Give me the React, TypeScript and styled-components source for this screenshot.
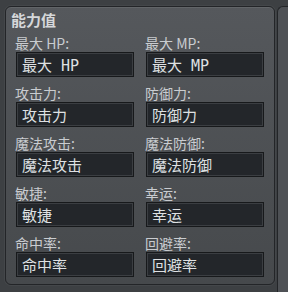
import styled, { createGlobalStyle } from "styled-components";

const GlobalStyle = createGlobalStyle`
  html, body {
    margin: 0;
    padding: 0;
    background: #3d4043;
    width: 288px;
    height: 292px;
    overflow: hidden;
  }
`;

const Screen = styled.div`
  display: flex;
  align-items: flex-start;
  gap: 2px;
  padding: 6px 0 0 5px;
  width: 288px;
  height: 292px;
  box-sizing: border-box;
  overflow: hidden;
  font-family: "Noto Sans CJK SC", "DejaVu Sans", sans-serif;
`;

const Panel = styled.section`
  box-sizing: border-box;
  width: 270px;
  height: 279px;
  flex-shrink: 0;
  border: 1px solid #232528;
  border-radius: 6px;
  background: linear-gradient(#55585c, #46494c);
  box-shadow: inset 0 1px 0 rgba(255, 255, 255, 0.08), 0 0 0 1px rgba(255, 255, 255, 0.04);
  padding: 3px 0 0 5px;
`;

const NextPanel = styled.div`
  box-sizing: border-box;
  flex: 1;
  min-width: 0;
  height: 286px;
  border: 1px solid #232528;
  border-right: none;
  border-bottom: none;
  border-radius: 6px 0 0 0;
  background: #4e5155;
`;

const Title = styled.h3`
  margin: 0;
  font-size: 15px;
  line-height: 20px;
  font-weight: 700;
  color: #d6d8da;
`;

const Grid = styled.div`
  display: grid;
  grid-template-columns: 118px 118px;
  column-gap: 12px;
  row-gap: 8px;
  margin: 5px 0 0 5px;
`;

const Field = styled.label`
  display: flex;
  flex-direction: column;
  gap: 1px;
`;

const Label = styled.span`
  font-size: 14px;
  line-height: 16px;
  color: #c9ccd0;
  margin-left: -1px;
`;

const Input = styled.div`
  box-sizing: border-box;
  height: 25px;
  border: 1px solid #17191b;
  box-shadow: inset 0 0 0 1px #3b3e42;
  background: #23262a;
  display: flex;
  align-items: center;
  padding: 0 5px;
  font-family: "DejaVu Sans Mono", "Noto Sans CJK SC", monospace;
  font-size: 15px;
  color: #dfe1e3;
`;

const stats = [
  ["最大 HP", "最大 MP"],
  ["攻击力", "防御力"],
  ["魔法攻击", "魔法防御"],
  ["敏捷", "幸运"],
  ["命中率", "回避率"],
];

export default function App() {
  return (
    <>
      <GlobalStyle />
      <Screen>
        <Panel>
          <Title>能力值</Title>
          <Grid>
            {stats.flat().map((name) => (
              <Field key={name}>
                <Label>{name}:</Label>
                <Input>{name}</Input>
              </Field>
            ))}
          </Grid>
        </Panel>
        <NextPanel />
      </Screen>
    </>
  );
}
